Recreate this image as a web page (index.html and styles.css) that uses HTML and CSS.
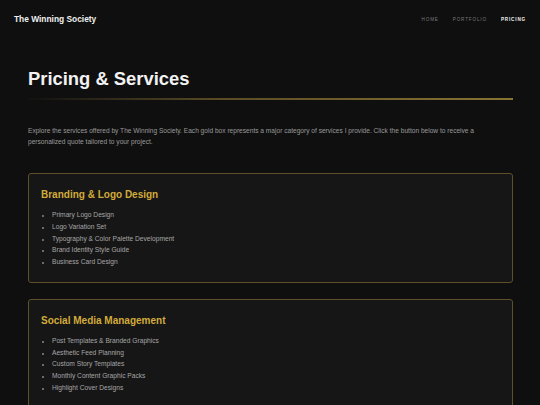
FILE: index.html
```html
<!DOCTYPE html>
<html>
<head>
<meta charset="utf-8">
<link rel="stylesheet" href="styles.css">
</head>
<body>
<header class="site-header">
  <div class="brand">The Winning Society</div>
  <nav class="nav">
    <a class="nav-link">Home</a>
    <a class="nav-link">Portfolio</a>
    <a class="nav-link active">Pricing</a>
  </nav>
</header>
<main class="content">
  <h1 class="page-title">Pricing &amp; Services</h1>
  <div class="title-rule"></div>
  <p class="intro">Explore the services offered by The Winning Society. Each gold box represents a major category of services I provide. Click the button below to receive a personalized quote tailored to your project.</p>
  <section class="card">
    <h2 class="card-title">Branding &amp; Logo Design</h2>
    <ul class="card-list">
      <li>Primary Logo Design</li>
      <li>Logo Variation Set</li>
      <li>Typography &amp; Color Palette Development</li>
      <li>Brand Identity Style Guide</li>
      <li>Business Card Design</li>
    </ul>
  </section>
  <section class="card">
    <h2 class="card-title">Social Media Management</h2>
    <ul class="card-list">
      <li>Post Templates &amp; Branded Graphics</li>
      <li>Aesthetic Feed Planning</li>
      <li>Custom Story Templates</li>
      <li>Monthly Content Graphic Packs</li>
      <li>Highlight Cover Designs</li>
    </ul>
  </section>
</main>
</body>
</html>
```
FILE: styles.css
```css
html, body {
  margin: 0;
  padding: 0;
  background: #0f0f0f;
  font-family: "Liberation Sans", Arial, sans-serif;
  color: #e8e8e8;
}
.site-header {
  display: flex;
  justify-content: space-between;
  align-items: center;
  height: 38px;
  padding: 0 14px;
}
.brand {
  font-size: 8.4px;
  font-weight: bold;
  color: #f0f0f0;
}
.nav {
  display: flex;
  gap: 14px;
}
.nav-link {
  font-size: 4.6px;
  letter-spacing: 0.85px;
  text-transform: uppercase;
  color: #777;
}
.nav-link.active {
  color: #f2f2f2;
  font-weight: bold;
}
.content {
  padding: 29px 27px 0 28px;
}
.page-title {
  margin: 0;
  font-size: 18.4px;
  font-weight: bold;
  color: #f2f2f2;
  line-height: 24px;
}
.title-rule {
  margin-top: 7px;
  height: 2px;
  background: linear-gradient(90deg, #111 0%, #5a4c25 40%, #8a7433 100%);
}
.intro {
  margin: 25px 0 26px;
  font-size: 6.6px;
  line-height: 11px;
  color: #9a9a9a;
}
.card {
  background: #161616;
  border: 1px solid #5e5029;
  border-radius: 3px;
  padding: 13px 12px 14px;
  margin-bottom: 16px;
}
.card-title {
  margin: 0 0 6px;
  font-size: 10px;
  line-height: 16px;
  font-weight: bold;
  color: #d2ab3a;
}
.card-list {
  margin: 0;
  padding-left: 11px;
  font-size: 6.65px;
  line-height: 11.75px;
  color: #a6a6a6;
}
.card-list li::marker {
  font-size: 5px;
  color: #888;
}
```
